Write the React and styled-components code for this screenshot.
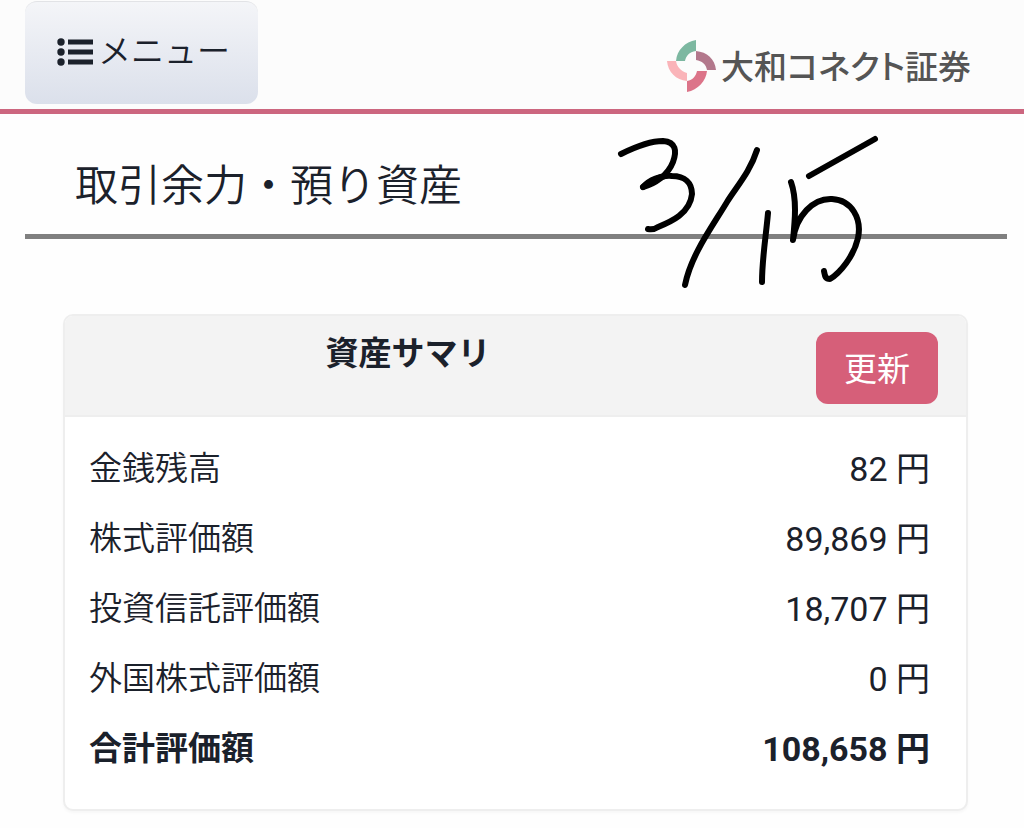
import React from "react";
import styled, { createGlobalStyle } from "styled-components";

const assets = [
  { label: "金銭残高", value: "82" },
  { label: "株式評価額", value: "89,869" },
  { label: "投資信託評価額", value: "18,707" },
  { label: "外国株式評価額", value: "0" },
  { label: "合計評価額", value: "108,658", total: true },
];

const ListIcon = () => (
  <MenuIcon viewBox="0 0 36 28" aria-hidden="true">
    <circle cx="4" cy="4" r="3.7" />
    <circle cx="4" cy="14" r="3.7" />
    <circle cx="4" cy="24" r="3.7" />
    <rect x="11" y="1.5" width="25" height="5" />
    <rect x="11" y="11.5" width="25" height="5" />
    <rect x="11" y="21.5" width="25" height="5" />
  </MenuIcon>
);

const BrandLogo = () => (
  <LogoMark viewBox="0 0 50 52" aria-hidden="true">
    <path d="M29 0 V11 C22 12 19 16 18 21 H9 C10 10 18 2 29 0 Z" fill="#7db8a1" />
    <path d="M29 11 C40 12 48 19 49 30 H40 C39 24 35 21 29 20 Z" fill="#b3788c" />
    <path d="M30 31 H40 C39 41 31 50 20 52 V41 C26 40 29 36 30 31 Z" fill="#dc7489" />
    <path d="M0 21 H9 C10 27 14 31 20 33 V41 C9 40 1 32 0 21 Z" fill="#fab4b9" />
  </LogoMark>
);

const DateNote = () => (
  <Note viewBox="0 0 270 160" role="img" aria-label="3/15">
    <path d="M6 20 C20 13 37 7 48 7 C61 8 62 17 58 28 C53 41 40 50 28 53 C34 46 46 41 57 42 C70 42 77 49 77 60 C75 80 55 88 43 93 C40 95 37 96 33 95" />
    <path d="M28 53 C36 46 43 44 50 42" />
    <path d="M142 16 C135 38 122 52 112 68 C97 93 76 121 70 151" />
    <path d="M153 79 C151 102 147 125 147 148" />
    <path d="M176 48 C182 65 180 86 178 106 C181 82 198 64 217 65 C237 66 247 85 243 104 C239 122 225 139 215 145 C210 145 210 142 209 137" />
    <path d="M194 42 L260 5" />
  </Note>
);

const App = () => {
  return (
    <>
      <GlobalStyle />
      <Header>
        <MenuButton type="button">
          <ListIcon />
          メニュー
        </MenuButton>
        <Brand href="#">
          <BrandLogo />
          <BrandName>大和コネクト証券</BrandName>
        </Brand>
      </Header>
      <main>
        <TitleBar>
          <Title>取引余力・預り資産</Title>
          <DateNote />
        </TitleBar>
        <Card>
          <CardHeader>
            <CardTitle>資産サマリ</CardTitle>
            <RefreshButton type="button">更新</RefreshButton>
          </CardHeader>
          <CardBody>
            <Table>
              <tbody>
                {assets.map(({ label, value, total }) => (
                  <Row key={label}>
                    <Label scope="row" $total={total}>
                      {label}
                    </Label>
                    <Amount $total={total}>{value} 円</Amount>
                  </Row>
                ))}
              </tbody>
            </Table>
          </CardBody>
        </Card>
      </main>
    </>
  );
};

const GlobalStyle = createGlobalStyle`
  * {
    box-sizing: border-box;
  }
  body {
    margin: 0;
    background: #fefefe;
    color: #1b212b;
    font-family: Roboto, "Noto Sans CJK JP", sans-serif;
    font-size: 33px;
  }
  button {
    font-family: inherit;
    font-size: inherit;
  }
`;

const Header = styled.header`
  display: flex;
  justify-content: space-between;
  align-items: flex-start;
  padding: 1px 53px 5px 25px;
  background: #fcfcfc;
  border-bottom: 5px solid #cc667f;
`;

const MenuButton = styled.button`
  display: flex;
  align-items: center;
  gap: 5px;
  height: 103px;
  padding: 0 28px 2px 32px;
  border: 0;
  border-top: 1px solid #e2e3e6;
  border-radius: 12px;
  background: linear-gradient(#f4f5f8, #dbe0eb);
  color: #1b212b;
  font-weight: 350;
  line-height: 50px;
`;

const MenuIcon = styled.svg`
  width: 36px;
  height: 28px;
  fill: currentColor;
`;

const Brand = styled.a`
  display: flex;
  align-items: center;
  gap: 4px;
  margin-top: 37px;
  color: #555;
  text-decoration: none;
`;

const LogoMark = styled.svg`
  width: 50px;
  height: 52px;
`;

const BrandName = styled.span`
  padding-top: 4px;
  font-weight: 500;
  font-feature-settings: "palt";
  line-height: 52px;
`;

const TitleBar = styled.div`
  position: relative;
  margin: 0 17px 75px 25px;
  padding: 40px 50px 16px;
  border-bottom: 5px solid #808080;
`;

const Title = styled.h1`
  margin: 0;
  font-size: 43px;
  font-weight: 350;
  line-height: 64px;
`;

/* handwritten date lying over the title rule */
const Note = styled.svg`
  position: absolute;
  top: 20px;
  right: 122px;
  width: 270px;
  height: 160px;
  fill: none;
  stroke: #000;
  stroke-width: 6px;
  stroke-linecap: round;
  stroke-linejoin: round;
`;

const Card = styled.section`
  margin: 0 56px 18px 63px;
  border: 2px solid #eeeeee;
  border-radius: 10px;
  background: #fff;
  box-shadow: 0 2px 3px #00000008;
  overflow: hidden;
`;

const CardHeader = styled.div`
  display: grid;
  grid-template-columns: 3fr 1fr;
  align-items: start;
  padding: 16px 28px 11px 25px;
  background: #f3f3f3;
  border-bottom: 2px solid #eeeeee;
`;

const CardTitle = styled.h2`
  margin: 0;
  font-size: 33px;
  font-weight: 700;
  line-height: 44px;
  text-align: center;
`;

const RefreshButton = styled.button`
  justify-self: end;
  padding: 13px 28px 9px;
  border: 0;
  border-radius: 12px;
  background: #d65f79;
  color: #fff;
  line-height: 50px;
`;

const CardBody = styled.div`
  padding: 17px 36px 25px 24px;
`;

const Table = styled.table`
  width: 100%;
  border-collapse: collapse;
`;

const Row = styled.tr`
  height: 70px;
`;

const Label = styled.th`
  padding: 0;
  font-weight: ${(props) => (props.$total ? 700 : 350)};
  line-height: 50px;
  text-align: left;
`;

const Amount = styled.td`
  padding: 0;
  font-size: 34px;
  font-weight: ${(props) => (props.$total ? 700 : 400)};
  line-height: 50px;
  text-align: right;
`;

export default App;
